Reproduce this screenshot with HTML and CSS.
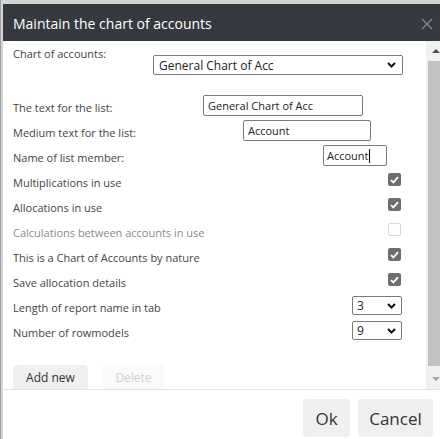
FILE: index.html
```html
<!DOCTYPE html>
<html>
<head>
<meta charset="utf-8">
<link rel="stylesheet" href="styles.css">
</head>
<body>
<div class="dialog">
  <div class="header">
    <span class="title">Maintain the chart of accounts</span>
    <svg class="close" width="12" height="12" viewBox="0 0 12 12"><path d="M1 1L11 11M11 1L1 11" stroke="#8b8e92" stroke-width="1.2" fill="none"/></svg>
  </div>
  <div class="scrollarea">
    <div class="content">
      <div class="row row-top">
        <span class="label">Chart of accounts:</span>
        <div class="select sel-wide"><span>General Chart of Acc</span><svg class="chev" width="9" height="6" viewBox="0 0 9 6"><path d="M1 1L4.5 4.5L8 1" stroke="#111" stroke-width="2" fill="none"/></svg></div>
      </div>
      <div class="row">
        <span class="label w190">The text for the list:</span>
        <div class="input in-160">General Chart of Acc</div>
      </div>
      <div class="row">
        <span class="label w230">Medium text for the list:</span>
        <div class="input in-128">Account</div>
      </div>
      <div class="row">
        <span class="label w310">Name of list member:</span>
        <div class="input in-64">Account<span class="caret"></span></div>
      </div>
      <div class="row row-check">
        <span class="label">Multiplications in use</span>
        <span class="cb on"><svg width="9" height="8" viewBox="0 0 9 8"><path d="M1 4.2L3.4 6.5L8 1.2" stroke="#fff" stroke-width="1.8" fill="none"/></svg></span>
      </div>
      <div class="row row-check">
        <span class="label">Allocations in use</span>
        <span class="cb on"><svg width="9" height="8" viewBox="0 0 9 8"><path d="M1 4.2L3.4 6.5L8 1.2" stroke="#fff" stroke-width="1.8" fill="none"/></svg></span>
      </div>
      <div class="row row-check">
        <span class="label disabled">Calculations between accounts in use</span>
        <span class="cb off"></span>
      </div>
      <div class="row row-check">
        <span class="label">This is a Chart of Accounts by nature</span>
        <span class="cb on"><svg width="9" height="8" viewBox="0 0 9 8"><path d="M1 4.2L3.4 6.5L8 1.2" stroke="#fff" stroke-width="1.8" fill="none"/></svg></span>
      </div>
      <div class="row row-check">
        <span class="label">Save allocation details</span>
        <span class="cb on"><svg width="9" height="8" viewBox="0 0 9 8"><path d="M1 4.2L3.4 6.5L8 1.2" stroke="#fff" stroke-width="1.8" fill="none"/></svg></span>
      </div>
      <div class="row row-check">
        <span class="label">Length of report name in tab</span>
        <div class="select sel-small"><span>3</span><svg class="chev" width="9" height="6" viewBox="0 0 9 6"><path d="M1 1L4.5 4.5L8 1" stroke="#111" stroke-width="2" fill="none"/></svg></div>
      </div>
      <div class="row row-check">
        <span class="label">Number of rowmodels</span>
        <div class="select sel-small"><span>9</span><svg class="chev" width="9" height="6" viewBox="0 0 9 6"><path d="M1 1L4.5 4.5L8 1" stroke="#111" stroke-width="2" fill="none"/></svg></div>
      </div>
      <div class="actions">
        <button class="btn-small">Add new</button>
        <button class="btn-small faded">Delete</button>
      </div>
    </div>
    <div class="scrollbar">
      <div class="arrow up"></div>
      <div class="thumb"></div>
      <div class="arrow down"></div>
    </div>
  </div>
  <div class="footer">
    <button class="btn btn-ok">Ok</button>
    <button class="btn btn-cancel">Cancel</button>
  </div>
</div>
</body>
</html>
```
FILE: styles.css
```css
* { box-sizing: border-box; }
html, body {
  margin: 0;
  width: 440px;
  height: 439px;
  overflow: hidden;
}
body {
  background: #d4d4d4;
  font-family: "Open Sans", "Liberation Sans", sans-serif;
  color: #444;
  padding: 4px 0 0 2px;
  border-left: 1px solid #a0a0a0;
}
.dialog {
  width: 438px;
  height: 440px;
  background: #fff;
  display: flex;
  flex-direction: column;
}
.header {
  height: 37px;
  flex: none;
  background: #363a40;
  display: flex;
  align-items: center;
  justify-content: space-between;
  padding: 0 8px 0 10px;
}
.title {
  color: #fff;
  font-size: 14px;
  padding-top: 1px;
}
.close { margin-top: 2px; }
.scrollarea {
  height: 349px;
  flex: none;
  display: flex;
  border-bottom: 1px solid #e2e2e2;
  overflow: hidden;
}
.content {
  flex: 1;
  padding: 0 23px 0 10px;
  display: flex;
  flex-direction: column;
  overflow: hidden;
}
.row {
  flex: none;
  display: flex;
  align-items: center;
  height: 25px;
  font-size: 11px;
}
.row-top {
  align-items: flex-start;
  height: 52px;
  padding-top: 5px;
  justify-content: space-between;
}
.row-check { justify-content: space-between; }
.label { flex: none; white-space: nowrap; padding-top: 3px; }
.row-top .label { padding-top: 0; }
.label.disabled { color: #8a8a8a; }
.w190 { width: 190px; }
.w230 { width: 230px; }
.w310 { width: 310px; }
.select {
  display: flex;
  align-items: center;
  justify-content: space-between;
  border: 1px solid #7a7a7a;
  border-radius: 2px;
  color: #222;
  background: #fff;
}
.sel-wide {
  width: 250px;
  height: 20px;
  margin-top: 9px;
  font-size: 12px;
  padding: 0 6px 0 5px;
}
.sel-small {
  width: 50px;
  height: 19px;
  font-size: 12px;
  padding: 0 5px 0 4px;
  margin-right: 1px;
}
.input {
  height: 21px;
  border: 1px solid #7a7a7a;
  border-radius: 2px;
  padding: 0 4px;
  color: #222;
  display: flex;
  align-items: center;
  font-size: 11px;
}
.in-160 { width: 160px; }
.in-128 { width: 128px; }
.in-64 { width: 64px; padding-left: 3px; }
.caret {
  display: inline-block;
  width: 1px;
  height: 14px;
  background: #000;
}
.cb {
  flex: none;
  width: 13px;
  height: 13px;
  border-radius: 2px;
  margin-right: 2px;
  margin-top: -2px;
  display: flex;
  align-items: center;
  justify-content: center;
}
.cb.on { background: #6e6e6e; }
.cb.off { border: 1px solid #d8d8d8; background: #fff; }
.actions {
  flex: none;
  display: flex;
  gap: 15px;
  margin-top: 22px;
}
.btn-small {
  font-family: "Open Sans", "Liberation Sans", sans-serif;
  font-size: 12px;
  color: #333;
  background: #efefef;
  border: none;
  border-radius: 4px;
  height: 25px;
  width: 75px;
  padding: 0;
}
.btn-small.faded {
  width: 61px;
  color: #cfcfcf;
  background: #fafafa;
}
.scrollbar {
  width: 15px;
  flex: none;
  background: #f1f1f1;
  display: flex;
  flex-direction: column;
  align-items: flex-end;
}
.arrow {
  flex: none;
  width: 13px;
  height: 20px;
  position: relative;
}
.arrow::after {
  content: "";
  position: absolute;
  left: 4px;
  border-left: 4px solid transparent;
  border-right: 4px solid transparent;
}
.arrow.up::after { top: 8px; border-bottom: 4px solid #505050; }
.arrow.down::after { top: 8px; border-top: 4px solid #a3a3a3; }
.thumb {
  width: 13px;
  flex: 1;
  background: #c1c1c1;
  margin-bottom: 3px;
}
.footer {
  flex: 1;
  display: flex;
  justify-content: flex-end;
  gap: 8px;
  padding: 9px 8px 0 0;
}
.btn {
  font-family: "Open Sans", "Liberation Sans", sans-serif;
  font-size: 17px;
  color: #333;
  background: #efefef;
  border: none;
  border-radius: 4px;
  height: 38px;
  padding: 0;
}
.btn-ok { width: 47px; }
.btn-cancel { width: 75px; }
```
